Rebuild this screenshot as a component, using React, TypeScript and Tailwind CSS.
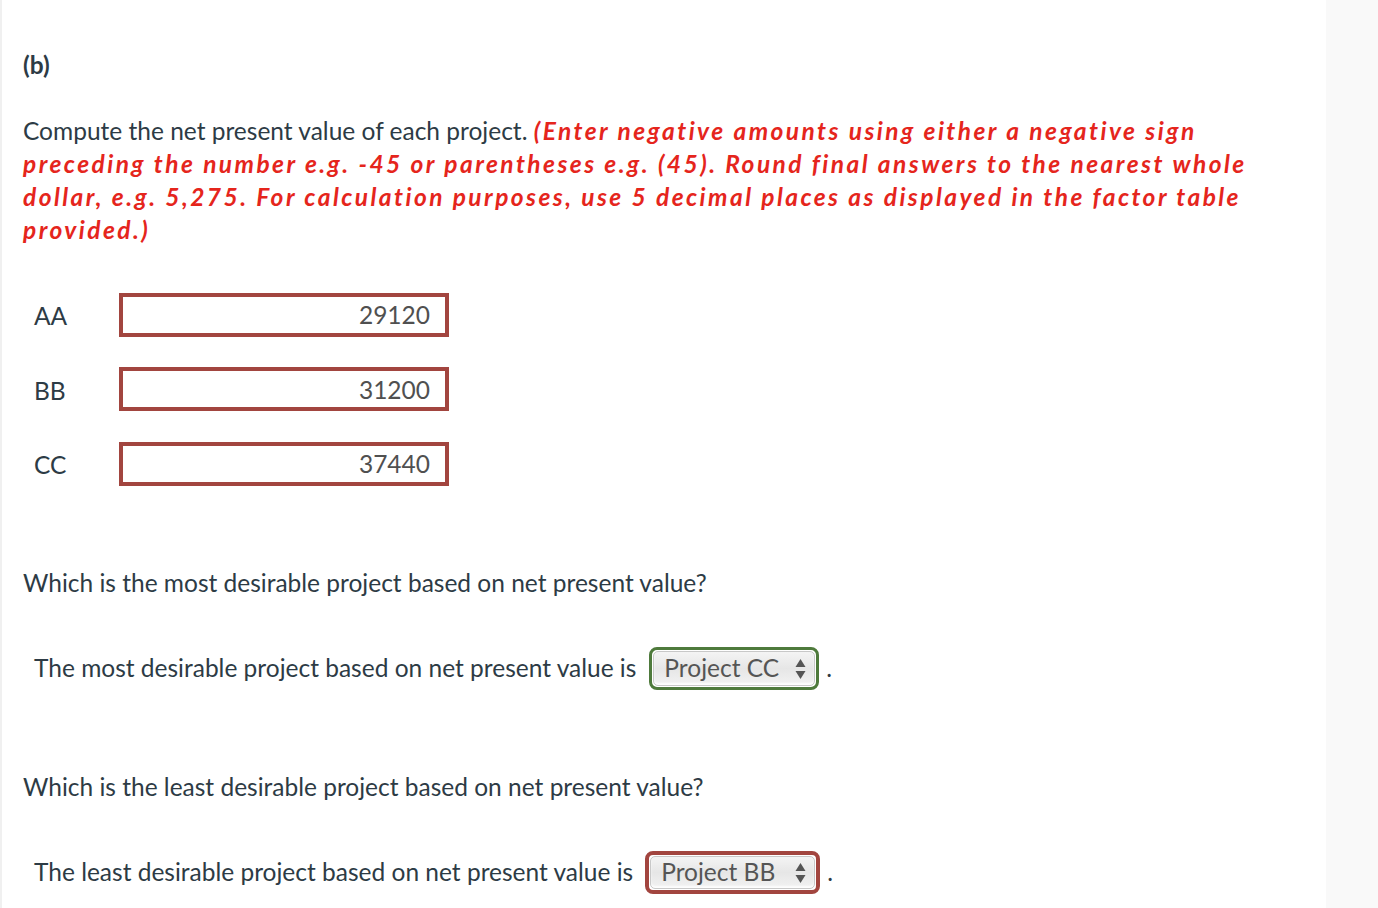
import React from "react";

const dark = "text-[#2d3b45]";

function Arrows() {
  return (
    <svg width="11" height="22" viewBox="0 0 11 22" className="shrink-0">
      <path d="M5.5 1 L10.5 9 L0.5 9 Z" fill="#555" />
      <path d="M5.5 21 L10.5 13 L0.5 13 Z" fill="#555" />
    </svg>
  );
}

function Select({ value, tone }: { value: string; tone: "green" | "red" }) {
  const outer =
    tone === "green"
      ? "border-[3px] border-[#4e7a3c] w-[170px]"
      : "border-[4px] border-[#a2453f] w-[175px]";
  return (
    <div className={`${outer} h-[43px] rounded-[8px] bg-white p-[1px] flex`}>
      <div className="flex-1 flex items-center justify-between rounded-[5px] border border-[#c8c8c8] bg-gradient-to-b from-[#f4f4f4] via-[#e6e6e6] to-[#f2f2f2] pl-[10px] pr-[8px] shadow-[inset_0_-2px_2px_rgba(255,255,255,0.9)]">
        <span className="text-[24.5px] text-[#555] leading-none">{value}</span>
        <Arrows />
      </div>
    </div>
  );
}

function Row({ label, value }: { label: string; value: string }) {
  return (
    <div className="flex items-center h-[44px]">
      <div className={`w-[96px] pl-[11px] text-[24.5px] ${dark} leading-none pt-[4px]`}>{label}</div>
      <div className="w-[330px] h-[44px] border-[4px] border-[#a2453f] bg-white flex items-center justify-end pr-[15px]">
        <span className="text-[24.5px] text-[#505050] leading-none pt-[2px]">{value}</span>
      </div>
    </div>
  );
}

export default function App() {
  return (
    <div className="flex min-h-[908px] bg-white" style={{ fontFamily: "Lato, 'Open Sans', sans-serif" }}>
      <main className="w-[1326px] border-l-2 border-[#f0f0f0] pl-[21px] pr-[40px] pt-[48px] pb-[10px]">
        <div className={`text-[24.5px] leading-[33px] font-bold ${dark}`}>(b)</div>
        <p className={`mt-[33px] text-[24.5px] leading-[33px] ${dark}`}>
          Compute the net present value of each project.{" "}
          <span className="font-bold italic text-[#e5251c] tracking-[2.45px]">
            (Enter negative amounts using either a negative sign preceding the number e.g. -45 or parentheses e.g. (45). Round final answers to the nearest whole dollar, e.g. 5,275. For calculation purposes, use 5 decimal places as displayed in the factor table provided.)
          </span>
        </p>
        <div className="mt-[46.5px] flex flex-col gap-[30.5px]">
          <Row label="AA" value="29120" />
          <Row label="BB" value="31200" />
          <Row label="CC" value="37440" />
        </div>
        <p className={`mt-[80px] text-[24.5px] leading-[33px] ${dark}`}>
          Which is the most desirable project based on net present value?
        </p>
        <div className={`mt-[48.5px] flex items-center pl-[11px] text-[24.5px] ${dark}`}>
          <span className="mr-[13px]">The most desirable project based on net present value is</span>
          <Select value="Project CC" tone="green" />
          <span className="ml-[7px]">.</span>
        </div>
        <p className={`mt-[79.5px] text-[24.5px] leading-[33px] ${dark}`}>
          Which is the least desirable project based on net present value?
        </p>
        <div className={`mt-[48.5px] flex items-center pl-[11px] text-[24.5px] ${dark}`}>
          <span className="mr-[12px]">The least desirable project based on net present value is</span>
          <Select value="Project BB" tone="red" />
          <span className="ml-[7px]">.</span>
        </div>
      </main>
      <aside className="flex-1 bg-[#f9f9f9]" />
    </div>
  );
}
